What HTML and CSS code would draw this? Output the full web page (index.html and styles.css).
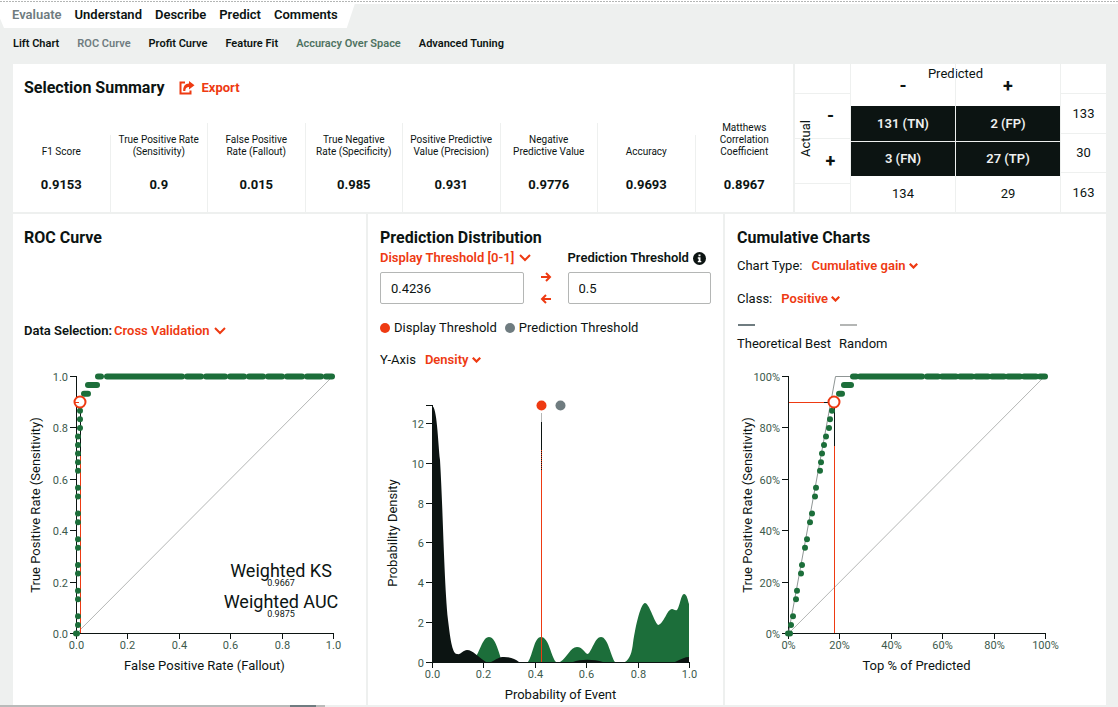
FILE: index.html
```html
<!DOCTYPE html>
<html lang="en">
<head>
<meta charset="utf-8">
<title>ROC Curve</title>
<link rel="stylesheet" href="styles.css">
</head>
<body>
<header>
  <div class="top-rule"></div>
  <nav class="tabs" aria-label="Model sections">
    <a href="#" class="muted">Evaluate</a>
    <a href="#">Understand</a>
    <a href="#">Describe</a>
    <a href="#">Predict</a>
    <a href="#">Comments</a>
  </nav>
  <nav class="subtabs" aria-label="Evaluate views">
    <a href="#">Lift Chart</a>
    <a href="#" class="muted">ROC Curve</a>
    <a href="#">Profit Curve</a>
    <a href="#">Feature Fit</a>
    <a href="#" class="soft">Accuracy Over Space</a>
    <a href="#">Advanced Tuning</a>
  </nav>
</header>

<main>
  <div class="row row-top">
    <section class="panel summary">
      <div class="summary-head">
        <h2>Selection Summary</h2>
        <button type="button" class="export">
          <svg width="16" height="14" viewBox="0 0 16 14" aria-hidden="true"><path d="M6 1.500H1.500v11h10V9.500" fill="none" stroke="currentColor" stroke-width="2"/><path d="M10 0l5.500 4.200L10 8.400V6C7.500 6 6.500 7 6.300 10H4.200C4 5.500 6 2.800 10 2.600z" fill="currentColor"/></svg>
          Export
        </button>
      </div>
      <dl class="stats">
        <div class="stat"><dt>F1 Score</dt><dd>0.9153</dd></div>
        <div class="stat"><dt>True Positive Rate<br>(Sensitivity)</dt><dd>0.9</dd></div>
        <div class="stat"><dt>False Positive<br>Rate (Fallout)</dt><dd>0.015</dd></div>
        <div class="stat"><dt>True Negative<br>Rate (Specificity)</dt><dd>0.985</dd></div>
        <div class="stat"><dt>Positive Predictive<br>Value (Precision)</dt><dd>0.931</dd></div>
        <div class="stat"><dt>Negative<br>Predictive Value</dt><dd>0.9776</dd></div>
        <div class="stat"><dt>Accuracy</dt><dd>0.9693</dd></div>
        <div class="stat"><dt>Matthews<br>Correlation<br>Coefficient</dt><dd>0.8967</dd></div>
      </dl>
    </section>

    <section class="panel" aria-label="Confusion matrix">
      <table class="matrix">
        <thead>
          <tr>
            <td class="corner"></td>
            <th class="predicted" colspan="2">Predicted</th>
            <td class="corner-right"></td>
          </tr>
          <tr>
            <th class="col-neg">-</th>
            <th class="col-pos">+</th>
          </tr>
        </thead>
        <tbody>
          <tr>
            <th class="actual" rowspan="2">Actual</th>
            <th class="row-neg">-</th>
            <td class="cell tn">131 (TN)</td>
            <td class="cell fp">2 (FP)</td>
            <td class="sum-neg">133</td>
          </tr>
          <tr>
            <th class="row-pos">+</th>
            <td class="cell fn">3 (FN)</td>
            <td class="cell tp">27 (TP)</td>
            <td class="sum-pos">30</td>
          </tr>
        </tbody>
        <tfoot>
          <tr>
            <td class="foot-left"></td>
            <td class="foot-neg">134</td>
            <td class="foot-pos">29</td>
            <td class="total">163</td>
          </tr>
        </tfoot>
      </table>
    </section>
  </div>

  <div class="row row-charts">
    <section class="panel">
      <div class="panel-head roc-head">
        <h2>ROC Curve</h2>
        <div class="field data-selection">
          <label for="data-selection" class="strong">Data Selection:</label>
          <span class="picker">
            <select id="data-selection"><option>Cross Validation</option></select>
            <svg width="12" height="8" viewBox="0 0 12 8" aria-hidden="true"><path d="M1 1l5 5 5-5"/></svg>
          </span>
        </div>
      </div>
      <svg id="roc" class="chart" viewBox="0 0 353 325" role="img" aria-label="ROC curve"></svg>
    </section>

    <section class="panel">
      <div class="panel-head">
        <h2>Prediction Distribution</h2>
        <div class="thresholds">
          <div class="threshold">
            <span class="picker">
              <select aria-label="Threshold type"><option>Display Threshold [0-1]</option></select>
              <svg width="12" height="8" viewBox="0 0 12 8" aria-hidden="true"><path d="M1 1l5 5 5-5"/></svg>
            </span>
            <input type="text" value="0.4236" aria-label="Display Threshold">
          </div>
          <div class="arrows">
            <button type="button" aria-label="Copy to prediction threshold"><svg width="12" height="10" viewBox="0 0 12 10" aria-hidden="true"><path d="M1 5h9M6 1l4 4-4 4"/></svg></button>
            <button type="button" aria-label="Copy to display threshold"><svg width="12" height="10" viewBox="0 0 12 10" aria-hidden="true"><path d="M11 5H2M6 1L2 5l4 4"/></svg></button>
          </div>
          <div class="threshold">
            <div class="threshold-label">
              <label for="prediction" class="strong">Prediction Threshold</label>
              <svg width="13" height="13" viewBox="0 0 13 13" aria-hidden="true"><circle cx="6.500" cy="6.500" r="6.500" fill="#0c1412"/><path d="M5.500 2.500h2v1.800h-2zM4.800 5.300h2.700v3.600h.8v1.400H4.800V8.900h.8V6.700h-.8z" fill="#fff"/></svg>
            </div>
            <input type="text" id="prediction" value="0.5">
          </div>
        </div>
        <ul class="legend">
          <li><i class="dot dot-display"></i>Display Threshold</li>
          <li><i class="dot dot-prediction"></i>Prediction Threshold</li>
        </ul>
        <div class="field">
          <label for="y-axis">Y-Axis</label>
          <span class="picker small">
            <select id="y-axis"><option>Density</option></select>
            <svg width="9" height="6" viewBox="0 0 12 8" aria-hidden="true"><path d="M1 1l5 5 5-5"/></svg>
          </span>
        </div>
      </div>
      <svg id="density" class="chart chart-density" viewBox="0 0 355 315" role="img" aria-label="Prediction distribution"></svg>
    </section>

    <section class="panel">
      <div class="panel-head cumulative-head">
        <h2>Cumulative Charts</h2>
        <div class="field">
          <label for="chart-type">Chart Type:</label>
          <span class="picker small">
            <select id="chart-type"><option>Cumulative gain</option></select>
            <svg width="9" height="6" viewBox="0 0 12 8" aria-hidden="true"><path d="M1 1l5 5 5-5"/></svg>
          </span>
        </div>
        <div class="field">
          <label for="class">Class:</label>
          <span class="picker small">
            <select id="class"><option>Positive</option></select>
            <svg width="9" height="6" viewBox="0 0 12 8" aria-hidden="true"><path d="M1 1l5 5 5-5"/></svg>
          </span>
        </div>
        <ul class="line-legend">
          <li><i class="line line-best"></i>Theoretical Best</li>
          <li><i class="line line-random"></i>Random</li>
        </ul>
      </div>
      <svg id="gain" class="chart" viewBox="0 0 381 325" role="img" aria-label="Cumulative gain"></svg>
    </section>
  </div>
</main>
<div class="scrollbar" aria-hidden="true"><span></span></div>
<script src="charts.js"></script>
</body>
</html>
```
FILE: styles.css
```css
* { box-sizing: border-box; }

body {
  margin: 0;
  min-height: 100vh;
  display: flex;
  flex-direction: column;
  background: #eef0ef;
  color: #0c1412;
  font: 13px/16px Roboto, "Liberation Sans", sans-serif;
}

a { color: inherit; text-decoration: none; }
h2 { margin: 0; font-size: 16px; line-height: 20px; font-weight: 700; }
ul { margin: 0; padding: 0; list-style: none; }
button { padding: 0; border: 0; background: none; font: inherit; color: #ee3a12; }

.top-rule {
  height: 4px;
  background: repeating-linear-gradient(90deg, #b4b6b5 0 2px, #ffffff 2px 3px) 0 1px / 100% 1px no-repeat #ffffff;
}

.tabs {
  display: flex;
  gap: 13px;
  width: fit-content;
  height: 24px;
  padding: 3px 17px 0 12px;
  background: #ffffff;
  clip-path: polygon(0 0, 100% 0, calc(100% - 8px) 100%, 4px 100%, 0 60%);
  font-weight: 600;
}

.subtabs {
  display: flex;
  gap: 18px;
  height: 36px;
  padding: 8px 13px 0;
  font-size: 11px;
  font-weight: 600;
}

.muted { color: #6f7c80; }
.soft { color: #4e7362; }
.strong { font-weight: 600; }

main {
  flex: 1;
  display: flex;
  flex-direction: column;
  gap: 2px;
  margin: 0 12px 0 13px;
}
.row { display: grid; gap: 2px; }
.row-top { grid-template-columns: 780fr 311fr; }
.row-charts { flex: 1; grid-template-columns: 353fr 355fr 381fr; }
.panel { background: #ffffff; min-width: 0; }

.summary { display: flex; flex-direction: column; justify-content: space-between; }
.summary-head { display: flex; gap: 15px; padding: 14px 11px 0; }
.export { display: flex; align-items: center; gap: 6px; font-weight: 700; }

.stats {
  display: grid;
  grid-template-columns: repeat(8, 1fr);
  align-items: end;
  margin: 0;
  text-align: center;
}
.stat { min-height: 89px; display: flex; flex-direction: column; justify-content: flex-end; padding-bottom: 19px; border-right: 1px solid #eef0ef; }
.stat:first-child, .stat:nth-child(7) { min-height: 77px; }
.stat:last-child { border-right: 0; }
.stat dt { font-size: 10px; line-height: 12px; }
.stat dd { margin: 19px 0 0; font-weight: 700; }

.matrix {
  display: grid;
  grid-template-columns: 22fr 34fr 105fr 104fr 46fr;
  grid-template-rows: 30px 12px 28px 5px 2px 32px 3px 8px 28px;
}
.matrix thead, .matrix tbody, .matrix tfoot, .matrix tr { display: contents; }
.matrix th, .matrix td {
  display: flex;
  align-items: center;
  justify-content: center;
  padding: 0;
  border: 0 solid #eef0ef;
  font-weight: 400;
}
.matrix .corner { grid-area: 1 / 1 / 2 / 3; border-width: 0 1px 1px 0; }
.matrix .predicted { grid-area: 1 / 3 / 2 / 5; align-items: flex-start; padding-top: 2px; }
.matrix .corner-right { grid-area: 1 / 5 / 2 / 6; border-width: 0 0 1px 1px; }
.matrix .col-neg { grid-area: 1 / 3 / 3 / 4; }
.matrix .col-pos { grid-area: 1 / 4 / 3 / 5; }
.matrix .col-neg, .matrix .col-pos { align-items: flex-end; padding-bottom: 11px; }
.matrix .col-neg { border-right-width: 1px; }
.matrix .actual { grid-area: 2 / 1 / 9 / 2; writing-mode: vertical-rl; rotate: 180deg; }
.matrix .row-neg { grid-area: 2 / 1 / 5 / 3; border-width: 0 1px 1px 0; }
.matrix .row-pos { grid-area: 5 / 1 / 9 / 3; border-width: 0 1px 1px 0; }
.matrix .row-neg, .matrix .row-pos { padding-left: 16px; }
.matrix .col-neg, .matrix .col-pos, .matrix .row-neg, .matrix .row-pos { font-size: 18px; font-weight: 700; line-height: 18px; }
.matrix .foot-left { grid-area: 9 / 1 / 10 / 3; border-right-width: 1px; }
.matrix .cell { background: #0c1412; color: #eef0ef; font-weight: 600; }
.matrix .tn { grid-area: 3 / 3 / 6 / 4; }
.matrix .fp { grid-area: 3 / 4 / 6 / 5; }
.matrix .fn { grid-area: 6 / 3 / 8 / 4; }
.matrix .tp { grid-area: 6 / 4 / 8 / 5; }
.matrix .tn, .matrix .fn { border-right-width: 1px; }
.matrix .fn, .matrix .tp { border-top-width: 1px; }
.matrix .foot-neg { grid-area: 8 / 3 / 10 / 4; border-right-width: 1px; }
.matrix .foot-pos { grid-area: 8 / 4 / 10 / 5; }
.matrix .sum-neg { grid-area: 2 / 5 / 4 / 6; border-width: 0 0 1px 1px; }
.matrix .sum-pos { grid-area: 4 / 5 / 7 / 6; border-width: 0 0 1px 1px; }
.matrix .total { grid-area: 7 / 5 / 10 / 6; border-left-width: 1px; }

.panel-head { padding: 14px 12px 0; }
.roc-head { padding-left: 11px; padding-right: 11px; }
.field { display: flex; align-items: center; gap: 9px; margin-top: 16px; }
.data-selection { gap: 2px; margin-top: 75px; margin-bottom: 27px; }
.cumulative-head .field { margin-top: 17px; }
.cumulative-head h2 + .field { margin-top: 10px; }

.picker { display: inline-flex; align-items: center; gap: 4px; height: 16px; color: #ee3a12; white-space: nowrap; }
.picker select {
  appearance: none;
  flex: none;
  border: 0;
  padding: 0;
  background: none;
  color: inherit;
  font: inherit;
  font-weight: 600;
}
.picker svg { flex: none; }
.picker path, .arrows path { fill: none; stroke: currentColor; stroke-width: 2; }
.picker.small { gap: 3px; }
.picker.small path { stroke-width: 3; }

.thresholds { display: flex; align-items: flex-end; margin-top: 2px; }
.threshold { flex: 1; min-width: 0; display: flex; flex-direction: column; gap: 6px; }
.threshold-label { display: flex; align-items: center; gap: 4px; height: 16px; white-space: nowrap; }
.threshold input {
  width: 100%;
  height: 32px;
  padding: 0 10px;
  border: 1px solid #b4b6b5;
  border-radius: 2px;
  background: #ffffff;
  color: inherit;
  font: inherit;
}
.arrows { width: 44px; display: flex; flex-direction: column; align-items: center; gap: 12px; }
.arrows button { display: flex; }

.legend { display: flex; gap: 8px; margin-top: 16px; }
.legend li { display: flex; align-items: center; gap: 4px; }
.dot { width: 10px; height: 10px; border-radius: 50%; }
.dot-display { background: #ee3a12; }
.dot-prediction { background: #6f7c80; }

.line-legend { display: flex; gap: 8px; margin-top: 17px; margin-bottom: 14px; }
.line-legend li { display: flex; flex-direction: column; gap: 10px; }
.line { width: 17px; height: 2px; margin-left: 1px; }
.line-best { background: #6f7c80; }
.line-random { background: #b4b6b5; }

.chart { display: block; width: 100%; }
.chart-density { margin-top: 22px; }
.chart text { fill: #0c1412; font-size: 13px; }
.chart .tick { fill: #3d5a4c; font-size: 11px; }
.chart .big { font-size: 18px; }
.chart .tiny { font-size: 9px; }
.axis { fill: none; stroke: #0c1412; shape-rendering: crispEdges; }
.guide { fill: none; stroke: #b4b6b5; }
.best { fill: none; stroke: #8f9695; }
.marker-line { stroke: #ee3a12; fill: none; }
.marker-top { stroke: #0c1412; fill: none; }
.marker { fill: #ffffff; stroke: #ee3a12; stroke-width: 2; }
.point { fill: #1c6e3a; }
.run { stroke: #1c6e3a; stroke-width: 6; stroke-linecap: round; }
.positive { fill: #1c6e3a; }
.negative { fill: #0c1412; }
.fill-display { fill: #ee3a12; }
.fill-prediction { fill: #6f7c80; }

.scrollbar { height: 2px; width: 325px; background: #b9bbba; }
.scrollbar span { display: block; height: 2px; width: 26px; margin-left: 290px; background: #6f7c80; }
```
FILE: charts.js
```js
function add(svg, name, attrs, text) {
  const el = document.createElementNS('http://www.w3.org/2000/svg', name);
  for (const key in attrs) el.setAttribute(key, attrs[key]);
  if (text !== undefined) el.textContent = text;
  svg.appendChild(el);
}

const path = (svg, cls, d) => add(svg, 'path', { class: cls, d });
const label = (svg, cls, x, y, anchor, text) =>
  add(svg, 'text', { class: cls, x, y, 'text-anchor': anchor }, text);

function axes(svg, box, xTicks, yTicks, xTitle, yTitle, titleX, titleY) {
  const { x, y, w, h } = box;
  path(svg, 'axis', `M${x - 6} ${y - h + .5}H${x + .5}V${y + .5}H${x + w + .5}v5`);
  xTicks.forEach((t, i) => {
    const px = Math.round(x + w * i / (xTicks.length - 1)) + .5;
    path(svg, 'axis', `M${px} ${y}v6`);
    label(svg, 'tick', px, y + 16, 'middle', t);
  });
  yTicks.forEach(([t, f]) => {
    const py = Math.round(y - h * f) + .5;
    path(svg, 'axis', `M${x - 6} ${py}h6`);
    label(svg, 'tick', x - 8, py + 4, 'end', t);
  });
  label(svg, '', x + w / 2, y + 37, 'middle', xTitle);
  add(svg, 'text', { transform: `translate(${titleX} ${titleY}) rotate(-90)`, 'text-anchor': 'middle' }, yTitle);
}

const unit = [0, .2, .4, .6, .8, 1];
const decimals = unit.map(v => v.toFixed(1));
const percents = unit.map(v => v * 100 + '%');
const hits = [1, 2, 4, 5, 7, 8, 10, 11, 13, 14, 16, 17, 19, 20, 21, 22, 23, 24, 25, 26];

function curve(svg, box, xs, runs) {
  const rowY = n => box.y + .5 - box.h * n / 30;
  hits.forEach((n, i) => add(svg, 'circle', { class: 'point', cx: box.x + xs[i], cy: rowY(n), r: 3 }));
  runs.forEach(([n, a, b]) => path(svg, 'run', `M${box.x + a} ${rowY(n)}H${box.x + b}`));
}

/* ROC curve */
const roc = document.getElementById('roc');
const rocBox = { x: 63, y: 267, w: 257, h: 257 };
axes(roc, rocBox, decimals, decimals.map((t, i) => [t, unit[i]]),
  'False Positive Rate (Fallout)', 'True Positive Rate (Sensitivity)', 27, 139);
path(roc, 'guide', 'M64 267L320 10');
path(roc, 'marker-line', 'M67.5 267V45');
path(roc, 'marker-top', 'M67.5 90V45');
curve(roc, rocBox, hits.map(n => n < 24 ? 2 : 4), [
  [0, 0, 1], [28, 8, 12], [29, 12, 21], [30, 22, 25], [30, 31, 106], [30, 111, 125],
  [30, 130, 149], [30, 154, 168], [30, 173, 187], [30, 192, 206], [30, 211, 226],
  [30, 231, 245], [30, 250, 256]
]);
add(roc, 'circle', { class: 'marker', cx: 67, cy: 36, r: 5.5 });
path(roc, 'marker-line', 'M62 36.5h4');
label(roc, 'big', 268, 211, 'middle', 'Weighted KS');
label(roc, 'tiny', 268, 220, 'middle', '0.9667');
label(roc, 'big', 268, 242, 'middle', 'Weighted AUC');
label(roc, 'tiny', 268, 251, 'middle', '0.9875');

/* Prediction distribution */
const density = document.getElementById('density');
const dBox = { x: 64, y: 272, w: 257, h: 257 };
path(density, 'positive', 'M104 272C112 264 114 247 121 247C127 247 130 259 134 272ZM160 272C165 265 166 247 173 247C181 247 183 267 188 272ZM192 272C200 267 202 257 209 257C215 257 217 264 220 264C224 261 227 247 233 247C240 247 243 267 247 272ZM257 272C262 269 264 262 265 253C268 233 273 213 277 213C281 213 286 231 290 235C296 234 299 219 304 219C306 219 307 221 309 220C312 216 313 204 316 204C319 204 320 211 321 214V272Z');
path(density, 'negative', 'M64 16C69 16 70 52 72 70C75 120 76 190 80 230C82 246 84 264 89 264C93 265 95 260 99 260C105 260 110 267 118 272H64ZM123 272C129 269 131 267 136 267C143 267 147 269 151 272ZM205 272C212 269 226 269 235 272ZM307 272C313 269 317 267 321 267V272Z');
path(density, 'marker-line', 'M173.5 272V88');
path(density, 'marker-top', 'M173.5 60V32');
add(density, 'path', { class: 'marker-line', d: 'M173.5 88V60' });
add(density, 'path', { class: 'marker-top', d: 'M173.5 80V60', 'stroke-dasharray': '1 1' });
path(density, 'guide', 'M173.5 32V23');
axes(density, dBox, decimals, [0, 2, 4, 6, 8, 10, 12].map(v => [v, v * 19.92 / 257]),
  'Probability of Event', 'Probability Density', 29, 143);
add(density, 'circle', { class: 'fill-display', cx: 173.5, cy: 15.5, r: 5 });
add(density, 'circle', { class: 'fill-prediction', cx: 192.5, cy: 15.5, r: 5 });

/* Cumulative gain */
const gain = document.getElementById('gain');
const gBox = { x: 63, y: 267, w: 257, h: 257 };
axes(gain, gBox, percents, percents.map((t, i) => [t, unit[i]]),
  'Top % of Predicted', 'True Positive Rate (Sensitivity)', 27, 139);
path(gain, 'guide', 'M64 267L320 10');
path(gain, 'best', 'M63.5 267L110.5 10.5H320');
path(gain, 'marker-line', 'M64 36.5H104M109.5 267V60');
path(gain, 'marker-top', 'M99 36.5H104M109.5 80V41');
curve(gain, gBox, [3, 5, 8, 9, 13, 14, 17, 19, 22, 24, 27, 28, 32, 33, 34, 36, 38, 41, 42, 44], [
  [0, 0, 2], [28, 51, 54], [29, 56, 63], [30, 65, 68], [30, 72, 134], [30, 139, 150],
  [30, 154, 168], [30, 172, 184], [30, 188, 200], [30, 204, 216], [30, 220, 232],
  [30, 236, 248], [30, 252, 257]
]);
add(gain, 'circle', { class: 'marker', cx: 109, cy: 36, r: 5.5 });
```
